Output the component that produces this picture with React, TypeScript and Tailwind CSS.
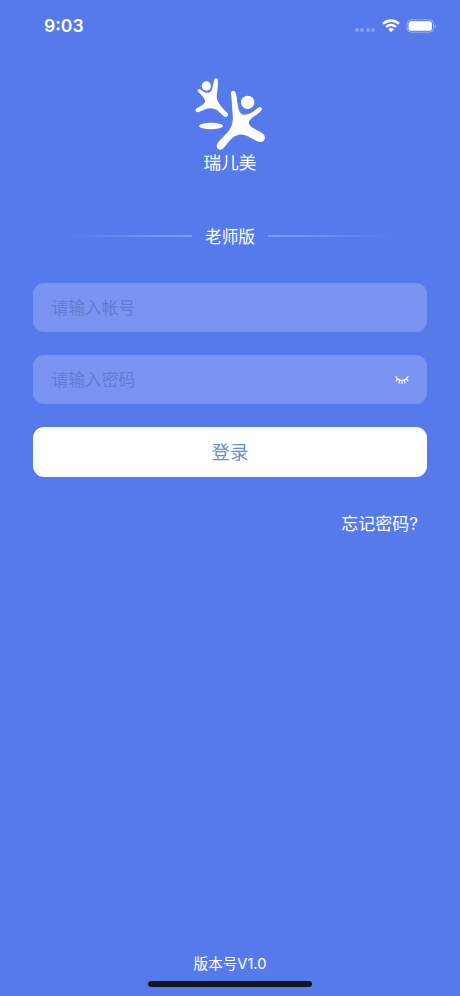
import { useState } from 'react';

function StatusBar() {
    return (
        <header className="flex h-[51px] items-center justify-between pr-[23px] pl-[44px]">
            <span className="font-['Inter'] text-[17.6px] leading-none font-semibold">9:03</span>

            <div className="flex items-center">
                <div className="mt-[9px] mr-[6px] flex gap-x-[1.4px]">
                    <span className="h-[4px] w-[4px] rounded-full bg-white/30" />
                    <span className="h-[4px] w-[4px] rounded-full bg-white/30" />
                    <span className="h-[4px] w-[4px] rounded-full bg-white/30" />
                    <span className="h-[4px] w-[4px] rounded-full bg-white/30" />
                </div>

                <svg className="mr-[5px] h-[14px] w-[20px]" viewBox="0 0 18 13" fill="currentColor">
                    <path d="M9 2.7c2.4 0 4.6.9 6.3 2.5.1.1.3.1.4 0l1.3-1.3c.1-.1.1-.3 0-.4a11.6 11.6 0 0 0-16 0c-.1.1-.1.3 0 .4l1.3 1.3c.1.1.3.1.4 0A9.2 9.2 0 0 1 9 2.7Z" />
                    <path d="M9 6.8c1.3 0 2.6.5 3.5 1.4.1.1.3.1.4 0l1.3-1.4c.1-.1.1-.3 0-.4a7.6 7.6 0 0 0-10.4 0c-.1.1-.1.3 0 .4l1.3 1.4c.1.1.3.1.4 0C6.4 7.3 7.7 6.8 9 6.8Z" />
                    <path d="M11.5 9.7c.1-.1.1-.3 0-.4a3.9 3.9 0 0 0-5 0c-.1.1-.1.3 0 .4l2.3 2.4c.1.1.3.1.4 0l2.3-2.4Z" />
                </svg>

                <svg className="h-[14px] w-[31px]" viewBox="0 0 31 14">
                    <rect x="1" y=".8" width="26.5" height="12.4" rx="3.8" fill="none" stroke="#fff" strokeOpacity=".4" />
                    <rect x="2.6" y="2.2" width="23.3" height="9.6" rx="2.6" fill="#fff" />
                    <path d="M28.7 4.9v4.3c.9-.4 1.4-1.2 1.4-2.1s-.5-1.8-1.4-2.2Z" fill="#fff" fillOpacity=".45" />
                </svg>
            </div>
        </header>
    );
}

function Logo() {
    return (
        <svg className="h-[81px] w-[100px]" viewBox="0 0 300 243" fill="#fff">
            <circle cx="79" cy="48" r="14" />
            <path d="M103 29C105 23 114 24 114 31C115 49 111 65 110 80C112 100 128 114 142 129C148 137 139 145 131 138C121 131 115 121 104 117C88 111 72 119 56 126C47 129 43 119 51 114C61 108 71 105 75 95C77 87 66 77 55 66C49 59 57 53 63 60C71 67 81 71 90 67C99 60 99 40 103 29Z" />
            <ellipse cx="93" cy="168" rx="36" ry="10" />
            <circle cx="203" cy="97" r="20" />
            <path d="M153 70C153 60 164 60 167 69C173 88 172 116 181 128C189 138 201 134 211 130C222 125 229 117 237 112C245 109 249 117 243 123C231 135 216 142 209 151C202 161 211 169 221 175L247 190C258 197 257 213 244 216C229 216 214 203 196 196C182 191 168 195 157 204C147 213 140 224 131 234C119 246 105 234 112 221C122 205 140 194 150 177C163 155 158 132 156 111C156 96 154 82 153 70Z" />
        </svg>
    );
}

function ClosedEye() {
    return (
        <svg className="mt-px h-[10px] w-[14px]" viewBox="0 0 14 10" fill="none" stroke="#fff" strokeWidth="1.2" strokeLinecap="round">
            <path d="M1 1.5C2 4 4 5.3 7 5.3s5-1.3 6-3.8M2.5 3.8 1.1 5.9M4.8 5 4 7.9M7 5.3v3.1M9.2 5l.8 2.9M11.5 3.8l1.4 2.1" />
        </svg>
    );
}

const fieldClass =
    'min-w-0 flex-1 bg-transparent pt-px text-[16.8px] leading-none text-white outline-none placeholder:text-[#607cd2]';

export default function App() {
    const [visible, setVisible] = useState(false);

    return (
        <main className="flex h-[996px] w-[460px] flex-col overflow-hidden bg-[#567aec] font-['Inter','Noto_Sans_CJK_SC',sans-serif] text-white">
            <StatusBar />

            <div className="mt-[19px] flex flex-col items-center">
                <Logo />
                <h1 className="pt-px text-[17.6px] leading-[22px] font-normal">瑞儿美</h1>
            </div>

            <div className="mt-[49px] flex items-center justify-center gap-x-[13px]">
                <span className="h-[2px] w-[125px] bg-linear-to-r from-transparent to-[#7f9ff6]" />
                <h2 className="pt-[2px] text-[16.7px] leading-[24px] font-normal">老师版</h2>
                <span className="h-[2px] w-[125px] bg-linear-to-l from-transparent to-[#7f9ff6]" />
            </div>

            <form className="mt-[33.5px] flex flex-col gap-y-[22.4px] px-[33.4px]" onSubmit={(e) => e.preventDefault()}>
                <label className="flex h-[49.8px] items-center rounded-[11px] bg-[#7a95f1] px-[18px]">
                    <input className={fieldClass} type="text" placeholder="请输入帐号" />
                </label>

                <label className="flex h-[49.8px] items-center rounded-[11px] bg-[#7a95f1] px-[18px]">
                    <input className={fieldClass} type={visible ? 'text' : 'password'} placeholder="请输入密码" />
                    <button type="button" aria-label="显示密码" onClick={() => setVisible(!visible)}>
                        <ClosedEye />
                    </button>
                </label>

                <button type="submit" className="h-[49.8px] rounded-[11px] bg-white pt-[2px] text-[18.5px] text-[#658ce4]">
                    登录
                </button>
            </form>

            <a className="mt-[35px] mr-[42px] self-end text-[17px] leading-[24px]">忘记密码?</a>

            <footer className="mt-auto flex flex-col items-center">
                <span className="text-[14.6px] leading-[20px]">版本号V1.0</span>
                <span className="mt-[7px] mb-[9px] h-[6px] w-[164px] rounded-full bg-[#14161f]" />
            </footer>
        </main>
    );
}
